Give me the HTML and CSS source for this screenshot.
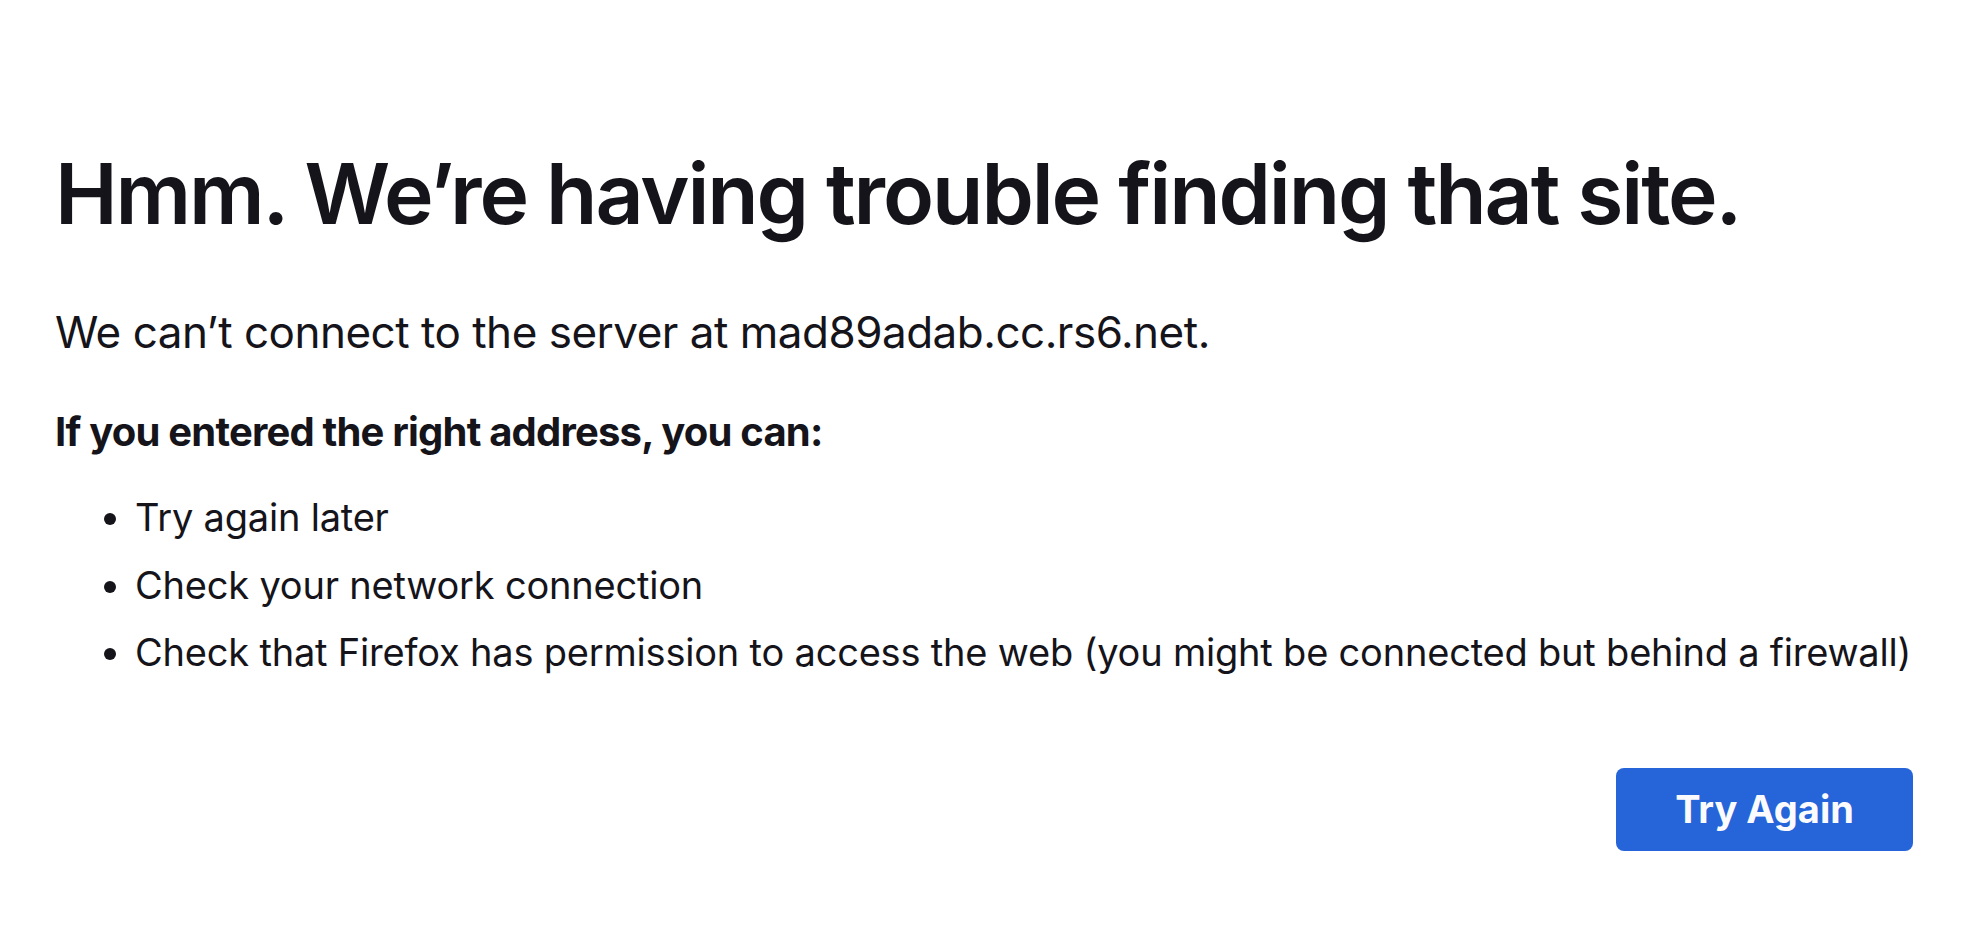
FILE: index.html
```html
<!DOCTYPE html>
<html>
<head>
<meta charset="utf-8">
<link rel="stylesheet" href="styles.css">
</head>
<body>
<main class="page">
  <h1 class="title">Hmm. We’re having trouble finding that site.</h1>
  <p class="desc">We can’t connect to the server at mad89adab.cc.rs6.net.</p>
  <p class="lead">If you entered the right address, you can:</p>
  <ul class="tips">
    <li>Try again later</li>
    <li>Check your network connection</li>
    <li>Check that Firefox has permission to access the web (you might be connected but behind a firewall)</li>
  </ul>
  <div class="actions">
    <button class="btn">Try Again</button>
  </div>
</main>
</body>
</html>
```
FILE: styles.css
```css
html, body {
  margin: 0;
  padding: 0;
  background: #ffffff;
}
body {
  font-family: Inter, "Noto Sans", sans-serif;
  color: #15141a;
}
.page {
  padding: 144px 55px 0 55px;
  width: 1868px;
  box-sizing: content-box;
}
.title {
  font-size: 84px;
  font-weight: 600;
  line-height: 100px;
  margin: 0;
  letter-spacing: -2.1px;
}
.desc {
  font-size: 44px;
  line-height: 60px;
  margin: 58px 0 0 0;
  letter-spacing: -0.5px;
}
.lead {
  font-size: 40px;
  font-weight: 700;
  line-height: 60px;
  margin: 40px 0 0 0;
  letter-spacing: -0.8px;
}
.tips {
  margin: 22px 0 0 0;
  padding-left: 80px;
  font-size: 38px;
  line-height: 67.5px;
  letter-spacing: -0.2px;
}
.tips li {
  white-space: nowrap;
}
.actions {
  display: flex;
  justify-content: flex-end;
  padding-right: 10px;
  margin-top: 81px;
}
.btn {
  width: 297px;
  height: 83px;
  border: none;
  border-radius: 8px;
  background: #2564d9;
  color: #fbfbfe;
  font-family: Inter, "Noto Sans", sans-serif;
  font-size: 38px;
  font-weight: 700;
}
```
